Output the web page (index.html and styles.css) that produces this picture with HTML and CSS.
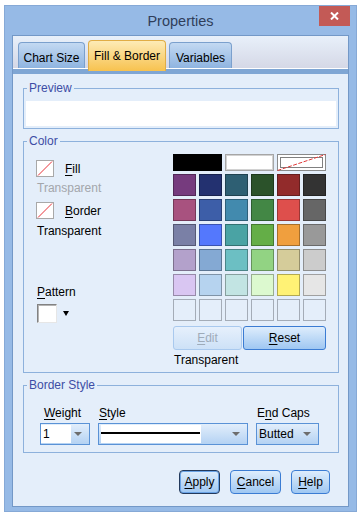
FILE: index.html
```html
<!DOCTYPE html>
<html>
<head>
<meta charset="utf-8">
<title>Properties</title>
<link rel="stylesheet" href="styles.css">
</head>
<body>
<div class="window">
  <div class="titlebar">
    <span class="spacer"></span>
    <div class="title">Properties</div>
    <div class="close"><svg width="9" height="8" viewBox="0 0 9 8"><path d="M1 0.5 L8 7.5 M8 0.5 L1 7.5" stroke="#fff" stroke-width="2"/></svg></div>
  </div>
  <div class="client">
    <div class="tabstrip">
      <div class="tab t1">Chart Size</div>
      <div class="tab active t2">Fill &amp; Border</div>
      <div class="tab t3">Variables</div>
    </div>
    <div class="band"></div>
    <div class="content">
      <section class="group preview">
        <div class="group-title">Preview</div>
        <div class="preview-box"></div>
      </section>

      <section class="group color">
        <div class="group-title">Color</div>
        <div class="color-body">
          <div class="left">
            <div class="chk-row first">
              <svg class="chk" width="18" height="17" viewBox="0 0 18 17"><rect x="0.5" y="0.5" width="17" height="16" fill="#fff" stroke="#a8a8a8"/><path d="M2 15.5 L16 1.5" stroke="#e8323a" stroke-width="1"/></svg>
              <span><u>F</u>ill</span>
            </div>
            <div class="note dim first-note">Transparent</div>
            <div class="chk-row second">
              <svg class="chk" width="18" height="17" viewBox="0 0 18 17"><rect x="0.5" y="0.5" width="17" height="16" fill="#fff" stroke="#a8a8a8"/><path d="M2 15.5 L16 1.5" stroke="#e8323a" stroke-width="1"/></svg>
              <span><u>B</u>order</span>
            </div>
            <div class="note second-note">Transparent</div>
            <div class="pattern-label"><u>P</u>attern</div>
            <div class="pattern-row"><div class="pattern-box"></div><span class="tri"></span></div>
          </div>
          <div class="right">
            <div class="palette">
              <div class="sw wide black"></div>
              <div class="sw wide white"></div>
              <div class="sw wide trans"><svg width="49" height="17" viewBox="0 0 49 17"><rect x="0.5" y="0.5" width="48" height="16" fill="#fff" stroke="#8a8a8a"/><rect x="3.5" y="3.5" width="42" height="10" fill="none" stroke="#000" stroke-dasharray="1 1"/><path d="M0.5 16.5 L48.5 0.5" stroke="#e03a3a" stroke-dasharray="4 1.5"/></svg></div>

              <div class="sw" style="background:#763b7e"></div>
              <div class="sw" style="background:#233170"></div>
              <div class="sw" style="background:#2e5f73"></div>
              <div class="sw" style="background:#2b522a"></div>
              <div class="sw" style="background:#922b2b"></div>
              <div class="sw" style="background:#333333"></div>

              <div class="sw" style="background:#a8527f"></div>
              <div class="sw" style="background:#3d5ea8"></div>
              <div class="sw" style="background:#428aae"></div>
              <div class="sw" style="background:#438745"></div>
              <div class="sw" style="background:#de4f4c"></div>
              <div class="sw" style="background:#666666"></div>

              <div class="sw" style="background:#7a80a6"></div>
              <div class="sw" style="background:#5478fd"></div>
              <div class="sw" style="background:#4aa3a4"></div>
              <div class="sw" style="background:#64ae47"></div>
              <div class="sw" style="background:#f09f3e"></div>
              <div class="sw" style="background:#999999"></div>

              <div class="sw" style="background:#b3a1cb"></div>
              <div class="sw" style="background:#84a9d3"></div>
              <div class="sw" style="background:#6cbfc3"></div>
              <div class="sw" style="background:#92d383"></div>
              <div class="sw" style="background:#d5cc9a"></div>
              <div class="sw" style="background:#cccccc"></div>

              <div class="sw" style="background:#d9c6f2"></div>
              <div class="sw" style="background:#b6d3ef"></div>
              <div class="sw" style="background:#c2e4e3"></div>
              <div class="sw" style="background:#dcf9cf"></div>
              <div class="sw" style="background:#fff275"></div>
              <div class="sw" style="background:#e6e6e6"></div>

              <div class="sw empty"></div>
              <div class="sw empty"></div>
              <div class="sw empty"></div>
              <div class="sw empty"></div>
              <div class="sw empty"></div>
              <div class="sw empty"></div>
            </div>
            <div class="btnrow">
              <button class="btn edit" disabled><u>E</u>dit</button>
              <button class="btn reset"><u>R</u>eset</button>
            </div>
            <div class="note after">Transparent</div>
          </div>
        </div>
      </section>

      <section class="group bstyle">
        <div class="group-title">Border Style</div>
        <div class="bs-body">
          <div class="col col-w">
            <div class="lbl lw"><u>W</u>eight</div>
            <div class="combo">
              <div class="field fw">1</div>
              <span class="arrow"></span>
            </div>
          </div>
          <div class="col col-s">
            <div class="lbl"><u>S</u>tyle</div>
            <div class="combo">
              <div class="field fs"><div class="line"></div></div>
              <span class="arrow"></span>
            </div>
          </div>
          <div class="col col-e">
            <div class="lbl">E<u>n</u>d Caps</div>
            <div class="combo">
              <div class="ctext">Butted</div>
              <span class="arrow"></span>
            </div>
          </div>
        </div>
      </section>

      <div class="actions">
        <button class="btn act apply"><u>A</u>pply</button>
        <button class="btn act cancel"><u>C</u>ancel</button>
        <button class="btn act help"><u>H</u>elp</button>
      </div>
    </div>
  </div>
</div>
</body>
</html>
```

FILE: styles.css
```css
* { box-sizing: border-box; }
html, body { margin: 0; padding: 0; }
body {
  width: 362px;
  height: 517px;
  overflow: hidden;
  background: #ffffff;
  font-family: "Liberation Sans", Arial, sans-serif;
  font-size: 12px;
  line-height: 14px;
  color: #000;
}
u { text-decoration: underline; text-underline-offset: 2px; }

.window {
  margin: 5px 0 0 4px;
  width: 353px;
  height: 507px;
  border: 1px solid #86a9d6;
  background: #96bae6;
  display: flex;
  flex-direction: column;
  padding: 0 7px 4px 7px;
}

.titlebar {
  height: 29px;
  display: grid;
  grid-template-columns: 1fr auto 1fr;
}
.title {
  padding-top: 6px;
  font-size: 14.5px;
  line-height: 18px;
  color: #2f3e5a;
  text-align: center;
  white-space: nowrap;
}
.close {
  justify-self: end;
  align-self: start;
  width: 31px;
  height: 20px;
  margin-right: -1px;
  background: #c35a56;
  display: flex;
  align-items: center;
  justify-content: center;
}

.client {
  flex: 1;
  border: 1px solid #7398c7;
  background: #e4eefa;
  display: flex;
  flex-direction: column;
}

.tabstrip {
  height: 33px;
  border-bottom: 1px solid #ffffff;
  background: linear-gradient(#e8f0fa, #d5d8e6);
  display: flex;
  align-items: flex-end;
  gap: 3px;
  padding-left: 5px;
}
.tab {
  height: 26px;
  padding-top: 8px;
  border: 1px solid #7ba0cd;
  border-bottom: none;
  border-radius: 4px 4px 0 0;
  background: linear-gradient(#c3d9f2, #8fb4e0);
  text-align: center;
  white-space: nowrap;
  color: #000;
}
.t1 { width: 67px; }
.t2 { width: 78px; }
.t3 { width: 63px; }
.tab.active {
  position: relative;
  z-index: 1;
  height: 31px;
  margin-bottom: -3px;
  border: 1px solid #e1ad45;
  border-bottom: none;
  background: linear-gradient(#fdebb6, #f7c24f);
}
.band {
  height: 5px;
  background: #7fa6d4;
}

.content {
  flex: 1;
  padding: 14px 9px 0 10px;
  display: flex;
  flex-direction: column;
}

.group {
  flex: none;
  border: 1px solid #8db1dc;
  padding: 0 2px;
}
.group-title {
  width: fit-content;
  margin: -8px 0 0 1px;
  padding: 0 2px;
  background: #e4eefa;
  color: #3d4da5;
  line-height: 14px;
  white-space: nowrap;
}

.preview-box {
  height: 25px;
  margin: 6px 0 2px;
  background: #ffffff;
}

.color { margin-top: 12px; }
.color-body {
  display: flex;
  padding: 6px 10px 5px 10px;
}
.left { flex: 1; }
.right { width: 153px; }

.chk-row {
  display: flex;
  align-items: center;
  height: 17px;
}
.chk-row.first { margin-top: 6px; }
.chk-row.second { margin-top: 7px; }
.chk-row span { margin-left: 11px; }
.chk { display: block; }
.note { padding-left: 1px; white-space: nowrap; }
.note.dim { color: #a3a6ab; }
.first-note { margin-top: 4px; }
.second-note { margin-top: 5px; }
.pattern-label { margin-top: 47px; padding-left: 1px; }
.pattern-row {
  margin-top: 5px;
  padding-left: 1px;
  display: flex;
  align-items: center;
}
.pattern-box {
  width: 20px;
  height: 19px;
  background: #ffffff;
  border: 1px solid;
  border-color: #828282 #e6e6e6 #e6e6e6 #828282;
  box-shadow: inset 1px 1px 0 #b4b4b4;
}
.tri {
  margin-left: 6px;
  width: 0;
  height: 0;
  border-left: 3.5px solid transparent;
  border-right: 3.5px solid transparent;
  border-top: 5px solid #000;
}

.palette {
  display: grid;
  grid-template-columns: repeat(6, 23px);
  grid-template-rows: 17px repeat(6, 22px);
  gap: 3px;
}
.sw {
  border: 1px solid rgba(0, 0, 0, 0.3);
}
.sw.wide { grid-column: span 2; }
.sw.black { background: #000; border-color: #000; }
.sw.white { background: #fff; border: 1px solid #a6a6a6; box-shadow: inset 0 0 0 1px #d2d2d2; }
.sw.trans { border: none; }
.sw.trans svg { display: block; }
.sw.empty { background: transparent; border-color: #a4acb7; }

.btn {
  font-family: "Liberation Sans", Arial, sans-serif;
  font-size: 12px;
  line-height: 20px;
  height: 24px;
  padding: 0;
  color: #000;
  border: 1px solid #3b7cd3;
  border-radius: 3px;
  background: linear-gradient(#deedfc, #9fc7f2);
}
.btnrow {
  margin-top: 5px;
  display: grid;
  grid-template-columns: 69px 83px;
  gap: 1px;
}
.btn.edit {
  color: #9eabb9;
  border-color: #a9c9ee;
  background: linear-gradient(#e6f0fc, #cde1f7);
}
.note.after { margin-top: 3px; }

.bstyle { margin-top: 12px; }
.bs-body {
  display: flex;
  gap: 8px;
  padding: 14px 0 7px 14px;
}
.col-w { width: 50px; }
.col-s { width: 150px; }
.col-e { width: 63px; }
.lbl { padding-left: 1px; white-space: nowrap; }
.lbl.lw { padding-left: 4px; }
.combo {
  margin-top: 3px;
  height: 22px;
  border: 1px solid #5a92d6;
  background: linear-gradient(#e2eefb, #b4d2f3);
  display: flex;
  align-items: center;
}
.field {
  height: 18px;
  background: #ffffff;
}
.fw { width: 30px; padding-left: 2px; line-height: 18px; }
.fs { width: 100px; margin-left: 2px; padding-top: 7px; }
.line { height: 2px; background: #000; margin-right: 1px; }
.ctext { padding-left: 2px; }
.arrow {
  margin-left: auto;
  margin-right: 7px;
  width: 0;
  height: 0;
  border-left: 4px solid transparent;
  border-right: 4px solid transparent;
  border-top: 4px solid #6d6d6d;
}

.actions {
  margin-top: 17px;
  padding-right: 9px;
  display: flex;
  justify-content: flex-end;
  gap: 10px;
  flex: none;
}
.btn.act { border-radius: 4px; }
.apply { width: 41px; border-color: #22395c; box-shadow: inset 0 0 0 1px #6aa3e6; }
.cancel { width: 51px; }
.help { width: 39px; }
```
